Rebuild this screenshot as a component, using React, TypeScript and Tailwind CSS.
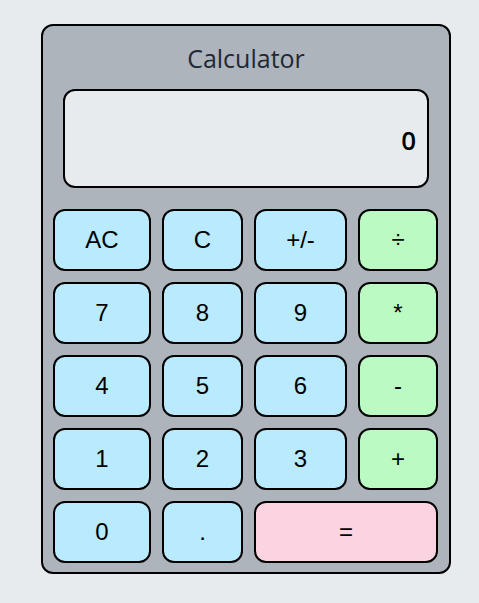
import React from "react";

type K = { label: string; color: "b" | "g" | "p"; span?: boolean };

const keys: K[] = [
  { label: "AC", color: "b" },
  { label: "C", color: "b" },
  { label: "+/-", color: "b" },
  { label: "÷", color: "g" },
  { label: "7", color: "b" },
  { label: "8", color: "b" },
  { label: "9", color: "b" },
  { label: "*", color: "g" },
  { label: "4", color: "b" },
  { label: "5", color: "b" },
  { label: "6", color: "b" },
  { label: "-", color: "g" },
  { label: "1", color: "b" },
  { label: "2", color: "b" },
  { label: "3", color: "b" },
  { label: "+", color: "g" },
  { label: "0", color: "b" },
  { label: ".", color: "b" },
  { label: "=", color: "p", span: true },
];

export default function App() {
  return (
    <div className="min-h-[603px] w-[479px] bg-[#e7ebee] pt-[24px] pl-[41px]">
      <div className="w-[410px] h-[550px] rounded-[12px] border-2 border-black bg-[#adb4bc] flex flex-col">
        <div
          className="pt-[16px] h-[64px] text-center text-[25px] leading-[32px] text-[#1f2937]"
          style={{ fontFamily: '"Open Sans", "Noto Sans", sans-serif' }}
        >
          Calculator
        </div>
        <div className="-mt-[1px] ml-[20px] w-[366px] h-[99px] rounded-[12px] border-2 border-black bg-[#e8ebee] flex items-center justify-end pr-[11px] pt-[3px]">
          <span
            className="text-[26px] leading-[32px] font-semibold text-black"
            style={{ fontFamily: '"Open Sans", "Noto Sans", sans-serif' }}
          >
            0
          </span>
        </div>
        <div
          className="mt-[21px] ml-[10px] grid grid-cols-[98px_81px_93px_80px] auto-rows-[62px] gap-[11px]"
          style={{ fontFamily: '"Liberation Sans", Arial, sans-serif' }}
        >
          {keys.map((k) => (
            <button
              key={k.label}
              className={
                "rounded-[12px] border-2 border-black text-[24px] text-black flex items-center justify-center " +
                (k.color === "b"
                  ? "bg-[#b9eafd]"
                  : k.color === "g"
                  ? "bg-[#bbfac2]"
                  : "bg-[#fbd3e1]") +
                (k.span ? " col-span-2" : "")
              }
            >
              {k.label}
            </button>
          ))}
        </div>
      </div>
    </div>
  );
}
